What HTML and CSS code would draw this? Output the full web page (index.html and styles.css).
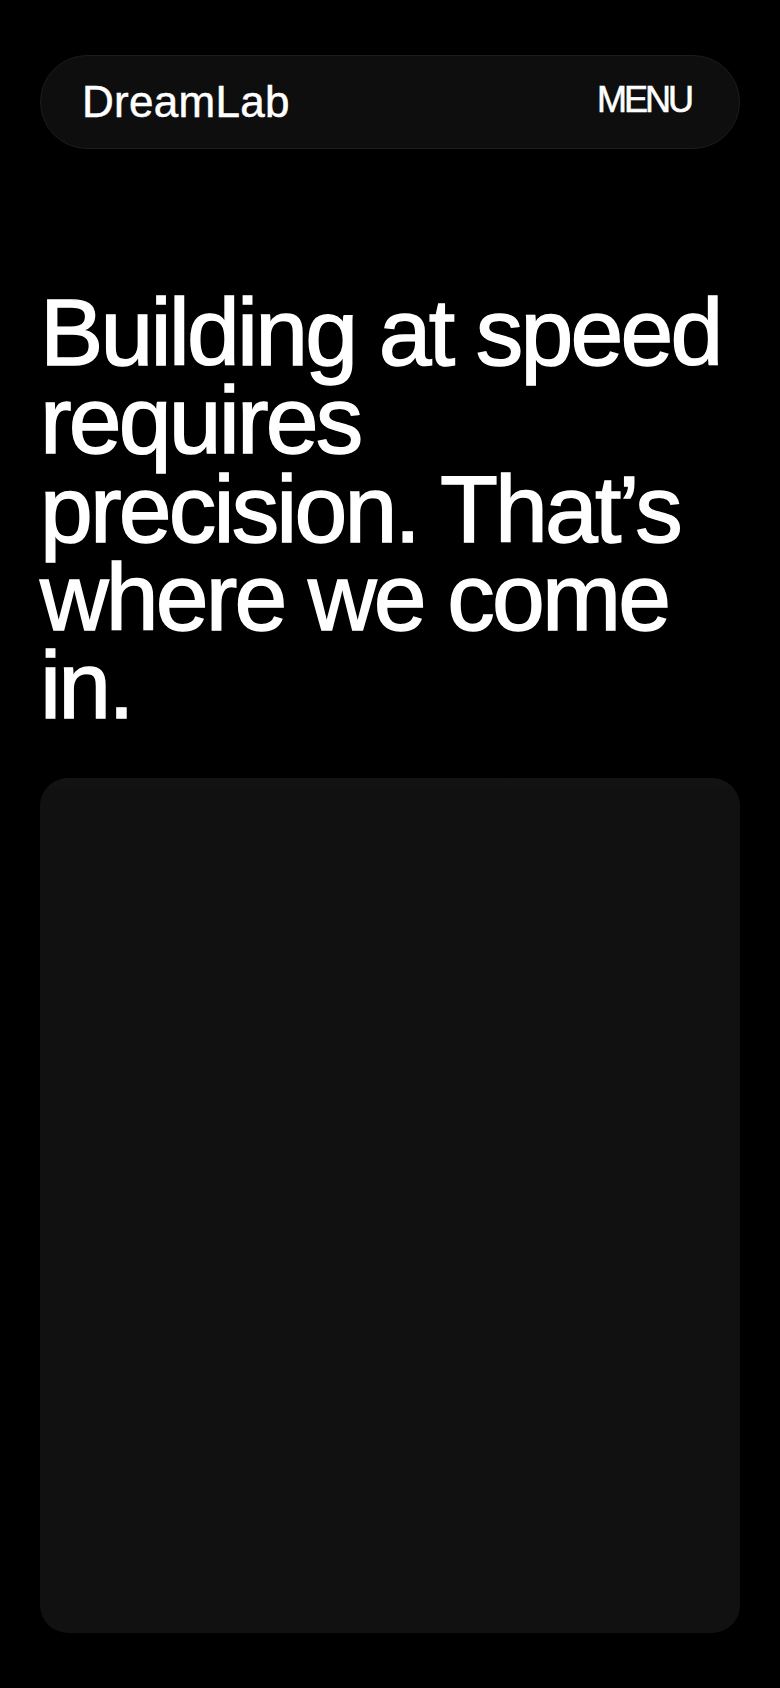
FILE: index.html
```html
<!DOCTYPE html>
<html lang="en">
<head>
<meta charset="utf-8">
<meta name="viewport" content="width=device-width, initial-scale=1">
<title>DreamLab</title>
<link rel="stylesheet" href="styles.css">
</head>
<body>
<div class="page">
  <header class="nav">
    <a class="brand" href="#">DreamLab</a>
    <button class="menu" type="button">MENU</button>
  </header>
  <main>
    <h1 class="hero">Building at speed requires precision. That’s where we come in.</h1>
    <div class="media-card"></div>
  </main>
</div>
</body>
</html>
```
FILE: styles.css
```css
* { box-sizing: border-box; }
html, body {
  margin: 0;
  padding: 0;
  background: #000;
  color: #fff;
  font-family: "Liberation Sans", Arial, sans-serif;
}
.page {
  padding: 55px 40px 55px;
}
.nav {
  height: 94px;
  display: flex;
  align-items: center;
  justify-content: space-between;
  padding: 0 48px 0 41px;
  background: #0e0e0e;
  border: 1px solid #1c1c1c;
  border-radius: 47px;
}
.brand {
  color: #fff;
  text-decoration: none;
  font-size: 44px;
  letter-spacing: 0.3px;
  line-height: normal;
  -webkit-text-stroke: 0.5px #fff;
}
.menu {
  background: none;
  border: 0;
  padding: 0;
  margin: 0 0 5px 0;
  color: #fff;
  font-family: inherit;
  font-size: 36px;
  letter-spacing: -3px;
  line-height: normal;
  cursor: pointer;
  -webkit-text-stroke: 0.6px #fff;
}
.hero {
  margin: 139px 0 48px;
  font-size: 95px;
  font-weight: 400;
  line-height: 0.93;
  letter-spacing: -0.03em;
  -webkit-text-stroke: 1.4px #fff;
}
.media-card {
  height: 855px;
  border-radius: 28px;
  background: linear-gradient(#141414, #111111 12px);
}
```
